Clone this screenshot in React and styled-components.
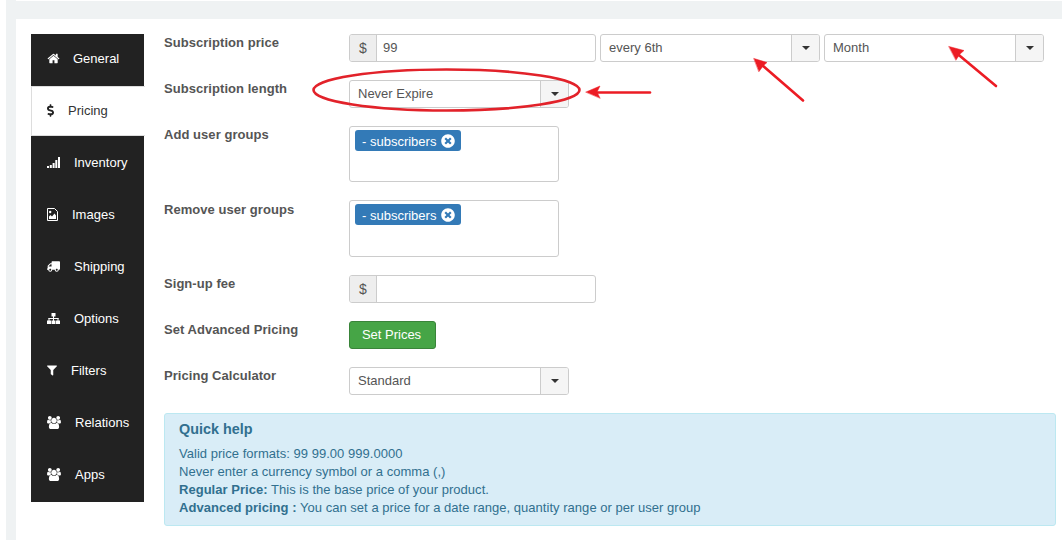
import styled, { createGlobalStyle } from "styled-components";
import {
  FaDollarSign,
  FaTruck,
  FaFilter,
  FaTimesCircle,
} from "react-icons/fa";

const HomeIcon = () => (
  <svg viewBox="0 0 1792 1792" width="13" height="13" fill="#fff">
    <path d="M1472 992v480q0 26-19 45t-45 19h-384v-384h-256v384h-384q-26 0-45-19t-19-45v-480q0-1 .5-3t.5-3l575-474 575 474q1 2 1 6zm223-69l-62 74q-8 9-21 11h-3q-13 0-21-7l-692-577-692 577q-12 8-24 7-13-2-21-11l-62-74q-8-10-7-23.5t11-21.5l719-599q32-26 76-26t76 26l244 204v-195q0-14 9-23t23-9h192q14 0 23 9t9 23v408l219 182q10 8 11 21.5t-7 23.5z" />
  </svg>
);

const UsersIcon = () => (
  <svg viewBox="0 0 1920 1792" width="14" height="13" fill="#fff">
    <path d="M593 896q-162 5-265 128h-134q-82 0-138-40.5t-56-118.5q0-353 124-353 6 0 43.5 21t97.5 42.5 119 21.5q67 0 133-23-5 37-5 66 0 139 81 256zm1071 637q0 120-73 189.5t-194 69.5h-874q-121 0-194-69.5t-73-189.5q0-53 3.5-103.5t14-109 26.5-108.5 43-97.5 62-81 85.5-53.5 111.500-20q10 0 43 21.500t73 48 107 48 135 21.500 135-21.500 107-48 73-48 43-21.500q61 0 111.500 20t85.500 53.500 62 81 43 97.500 26.500 108.500 14 109 3.500 103.500zm-1024-1277q0 106-75 181t-181 75-181-75-75-181 75-181 181-75 181 75 75 181zm704 384q0 159-112.500 271.500t-271.500 112.500-271.500-112.500-112.500-271.500 112.500-271.500 271.500-112.500 271.500 112.500 112.500 271.500zm576 225q0 78-56 118.500t-138 40.500h-134q-103-123-265-128 81-117 81-256 0-29-5-66 66 23 133 23 59 0 119-21.500t97.500-42.500 43.500-21q124 0 124 353zm-128-609q0 106-75 181t-181 75-181-75-75-181 75-181 181-75 181 75 75 181z" />
  </svg>
);

const SignalIcon = () => (
  <svg width="13" height="11" viewBox="0 0 13 11" fill="#fff">
    <rect x="0" y="9" width="2" height="2" />
    <rect x="2.8" y="8" width="2" height="3" />
    <rect x="5.6" y="6" width="2" height="5" />
    <rect x="8.3" y="3" width="2" height="8" />
    <rect x="11" y="0" width="2" height="11" />
  </svg>
);

const ImageFileIcon = () => (
  <svg width="11" height="13" viewBox="0 0 11 13">
    <path d="M.5.500H7.500L10.500 3.500V12.500H.5Z" fill="none" stroke="#fff" />
    <circle cx="3.200" cy="4" r="1.200" fill="#fff" />
    <path d="M2 11V8.500L3.500 7L5 8.500L7.500 5.500L9 7.500V11Z" fill="#fff" />
  </svg>
);

const SitemapIcon = () => (
  <svg width="13" height="11" viewBox="0 0 13 11" fill="#fff">
    <rect x="4.500" y="0" width="4" height="3.500" />
    <rect x="6" y="3" width="1" height="3" />
    <rect x="1.500" y="5" width="10" height="1" />
    <rect x="1.500" y="5" width="1" height="3" />
    <rect x="10.500" y="5" width="1" height="3" />
    <rect x="0" y="7.500" width="4" height="3.500" />
    <rect x="4.500" y="7.500" width="4" height="3.500" />
    <rect x="9" y="7.500" width="4" height="3.500" />
    <rect x="6" y="6" width="1" height="2" />
  </svg>
);

const tabs = [
  { label: "General", icon: <HomeIcon />, w: 13, gap: 13, pb: 4 },
  { label: "Pricing", icon: <FaDollarSign />, w: 7, gap: 14, pb: 2, active: true },
  { label: "Inventory", icon: <SignalIcon />, w: 13, gap: 14 },
  { label: "Images", icon: <ImageFileIcon />, w: 11, gap: 14 },
  { label: "Shipping", icon: <FaTruck style={{ transform: "scaleX(-1)" }} />, w: 13, gap: 14 },
  { label: "Options", icon: <SitemapIcon />, w: 13, gap: 14 },
  { label: "Filters", icon: <FaFilter />, w: 10, gap: 14 },
  { label: "Relations", icon: <UsersIcon />, w: 14, gap: 14 },
  { label: "Apps", icon: <UsersIcon />, w: 14, gap: 14 },
];

function Select({ value, width }) {
  return (
    <SelectBox $width={width}>
      <span className="value">{value}</span>
      <span className="caret">
        <i />
      </span>
    </SelectBox>
  );
}

function Tag() {
  return (
    <TagBox>
      - subscribers <FaTimesCircle size={14} />
    </TagBox>
  );
}

export default function App() {
  return (
    <>
      <Global />
      <Page>
        <TopEdge />
        <Card>
          <Tabs>
            {tabs.map((t) => (
              <Tab key={t.label} $active={t.active} $gap={t.gap} $pb={t.pb}>
                <IconSlot $w={t.w} $active={t.active}>{t.icon}</IconSlot>
                <span>{t.label}</span>
              </Tab>
            ))}
          </Tabs>
          <Content>
            <Row>
              <Label>Subscription price</Label>
              <Controls>
                <Prepend $width={247}>
                  <span className="addon">$</span>
                  <span className="field">99</span>
                </Prepend>
                <Select value="every 6th" width={220} />
                <Select value="Month" width={220} />
              </Controls>
            </Row>
            <Row>
              <Label>Subscription length</Label>
              <Select value="Never Expire" width={220} />
            </Row>
            <Row>
              <Label>Add user groups</Label>
              <MultiBox $height={56}>
                <Tag />
              </MultiBox>
            </Row>
            <Row>
              <Label $drop={1}>Remove user groups</Label>
              <MultiBox $height={57}>
                <Tag />
              </MultiBox>
            </Row>
            <Row>
              <Label>Sign-up fee</Label>
              <Prepend $width={247}>
                <span className="addon">$</span>
                <span className="field" />
              </Prepend>
            </Row>
            <Row>
              <Label>Set Advanced Pricing</Label>
              <GreenButton>Set Prices</GreenButton>
            </Row>
            <Row>
              <Label>Pricing Calculator</Label>
              <Select value="Standard" width={220} />
            </Row>
            <Help>
              <h4>Quick help</h4>
              <p>Valid price formats: 99 99.00 999.0000</p>
              <p>Never enter a currency symbol or a comma (,)</p>
              <p>
                <b>Regular Price:</b> This is the base price of your product.
              </p>
              <p>
                <b>Advanced pricing :</b> You can set a price for a date range,
                quantity range or per user group
              </p>
            </Help>
          </Content>
        </Card>
        <Marks width="1063" height="540" viewBox="0 0 1063 540">
          <ellipse cx="446.500" cy="90" rx="133" ry="20.500" fill="none" stroke="#e2222a" strokeWidth="2.600" />
          <g stroke="#ec1c24" strokeWidth="2.600" fill="#ec1c24" strokeLinecap="round">
            <path d="M650 92.500H596" fill="none" />
            <path d="M586 92L600 86L597 92L600 98Z" strokeWidth="0.500" />
            <path d="M803 100.500L762 65" fill="none" />
            <path d="M754 58.500L767 62.500L763.500 65.500L759 71.500Z" strokeWidth="0.500" />
            <path d="M996 86L957 53.500" fill="none" />
            <path d="M949 46.500L964 50.500L960 54L956 60Z" strokeWidth="0.500" />
          </g>
        </Marks>
      </Page>
    </>
  );
}

const Global = createGlobalStyle`
  html, body {
    margin: 0;
    padding: 0;
    background: #fff;
  }
  body {
    font-family: "Liberation Sans", Arial, sans-serif;
    font-size: 13px;
    color: #555;
  }
`;

const Page = styled.div`
  position: relative;
  width: 1056px;
  height: 540px;
  overflow: hidden;
  box-sizing: border-box;
  margin-left: 6px;
  padding-left: 10px;
  background: #eff2f3;
`;

const TopEdge = styled.div`
  height: 1px;
  margin-bottom: 18px;
  background: #fff;
`;

const Card = styled.div`
  display: flex;
  align-items: flex-start;
  height: 521px;
  box-sizing: border-box;
  padding: 15px 6px 0 15px;
  background: #fff;
`;

const Tabs = styled.nav`
  display: flex;
  flex-direction: column;
  width: 113px;
  flex: none;
  padding-bottom: 2px;
  background: #222;
`;

const Tab = styled.div`
  display: flex;
  align-items: center;
  gap: ${(p) => p.$gap}px;
  height: ${(p) => (p.$active ? 50 : 52)}px;
  box-sizing: border-box;
  padding-left: 16px;
  padding-bottom: ${(p) => p.$pb || 0}px;
  color: ${(p) => (p.$active ? "#333" : "#fff")};
  background: ${(p) => (p.$active ? "#fff" : "#222")};
  ${(p) => p.$active && "border-left: 1px solid #ddd; border-top: 1px solid #ddd; border-bottom: 1px solid #ddd; padding-left: 15px; margin-right: -1px;"}
  font-size: 13px;
`;

const IconSlot = styled.span`
  display: flex;
  align-items: center;
  justify-content: flex-start;
  flex: none;
  width: ${(p) => p.$w}px;
  height: 13px;
  color: ${(p) => (p.$active ? "#222" : "#fff")};

  svg {
    display: block;
    width: 100%;
    height: 100%;
  }
`;

const Content = styled.div`
  flex: 1;
  min-width: 0;
  margin-left: 20px;
`;

const Row = styled.div`
  display: grid;
  grid-template-columns: 185px 1fr;
  align-items: start;
  margin-bottom: 18px;
`;

const Label = styled.label`
  margin-top: ${(p) => p.$drop || 0}px;
  font-weight: 700;
  font-size: 13px;
  line-height: 18px;
  letter-spacing: 0.05px;
  color: #555;
`;

const Controls = styled.div`
  display: flex;
  gap: 4px;
`;

const Prepend = styled.div`
  display: flex;
  width: ${(p) => p.$width}px;
  height: 28px;
  box-sizing: border-box;
  border: 1px solid #ccc;
  border-radius: 3px;
  font-size: 13px;
  line-height: 26px;
  color: #555;

  .addon {
    width: 27px;
    flex: none;
    box-sizing: border-box;
    font-size: 14px;
    text-align: center;
    background: #eee;
    border-right: 1px solid #ccc;
    border-radius: 2px 0 0 2px;
  }
  .field {
    flex: 1;
    padding-left: 6px;
  }
`;

const SelectBox = styled.div`
  display: flex;
  width: ${(p) => p.$width}px;
  height: 28px;
  box-sizing: border-box;
  border: 1px solid #ccc;
  border-radius: 3px;
  font-size: 13px;
  line-height: 26px;
  color: #555;
  background: #fff;

  .value {
    flex: 1;
    padding-left: 8px;
  }
  .caret {
    width: 28px;
    flex: none;
    box-sizing: border-box;
    display: flex;
    align-items: center;
    justify-content: center;
    background: #f5f5f5;
    border-left: 1px solid #ccc;
    border-radius: 0 2px 2px 0;
  }
  .caret i {
    width: 0;
    height: 0;
    border-left: 4px solid transparent;
    border-right: 4px solid transparent;
    border-top: 4px solid #333;
  }
`;

const MultiBox = styled.div`
  width: 210px;
  height: ${(p) => p.$height}px;
  box-sizing: border-box;
  padding: 3px 5px;
  border: 1px solid #ccc;
  border-radius: 3px;
  background: #fff;
`;

const TagBox = styled.span`
  display: inline-flex;
  align-items: center;
  gap: 5px;
  height: 21px;
  box-sizing: border-box;
  padding: 1px 6px 0 7px;
  border-radius: 3px;
  background: #337ab7;
  color: #fff;
  font-size: 13px;

  svg {
    margin-top: -1px;
  }
`;

const GreenButton = styled.button`
  display: block;
  width: 87px;
  height: 28px;
  padding: 0 2px 2px 0;
  font: inherit;
  font-size: 13px;
  color: #fff;
  background: #46a546;
  border: 1px solid #398439;
  border-radius: 3px;
`;

const Help = styled.div`
  box-sizing: border-box;
  height: 113px;
  padding: 5px 14px;
  background: #d9edf7;
  border: 1px solid #bce8f1;
  border-radius: 3px;
  color: #31708f;
  font-size: 13px;
  line-height: 18px;
  letter-spacing: 0.03px;

  h4 {
    margin: 0 0 6px;
    font-size: 14.4px;
    line-height: 20px;
    font-weight: 700;
    letter-spacing: 0;
  }
  p {
    margin: 0;
  }
`;

const Marks = styled.svg`
  position: absolute;
  left: -6px;
  top: 0;
  pointer-events: none;
`;
